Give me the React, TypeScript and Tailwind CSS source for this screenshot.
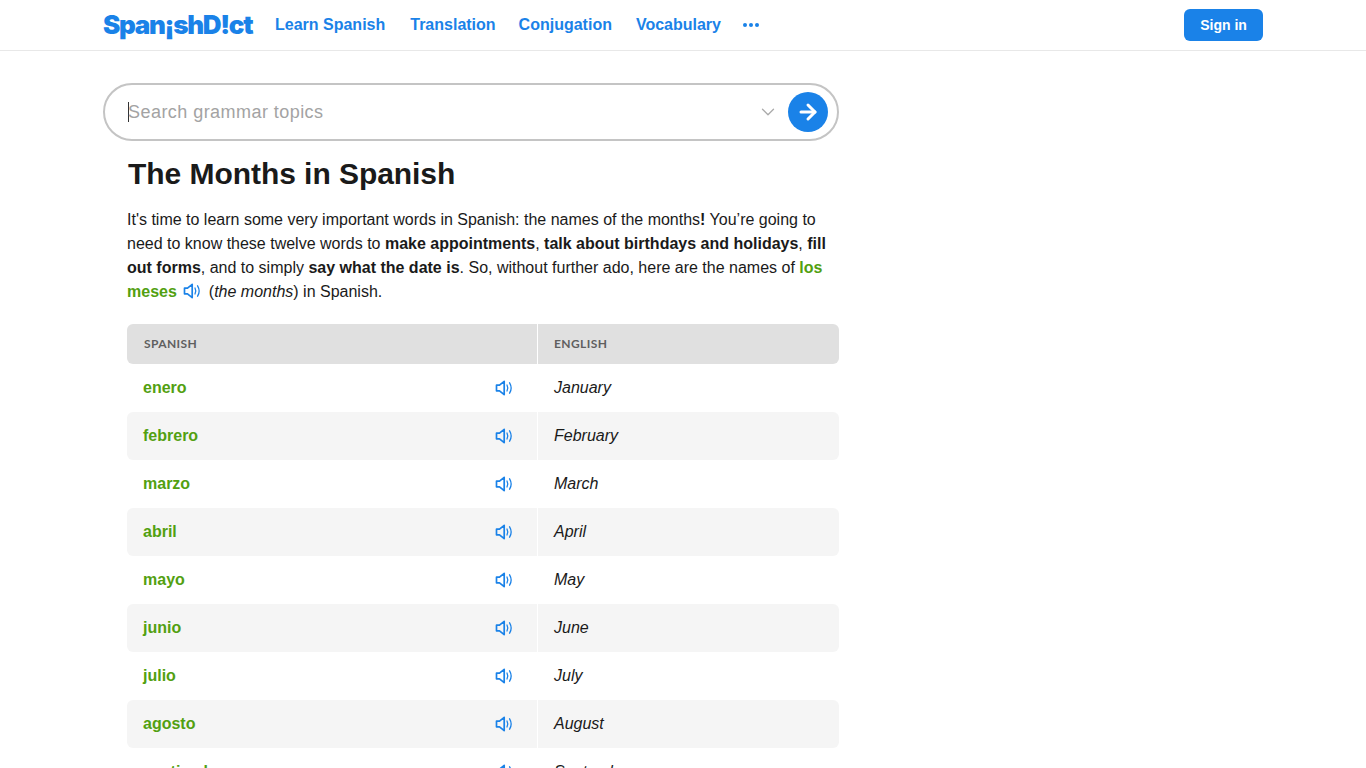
import React from 'react';
import { ArrowRight, ChevronDown } from 'lucide-react';

const months = [
  ['enero', 'January'],
  ['febrero', 'February'],
  ['marzo', 'March'],
  ['abril', 'April'],
  ['mayo', 'May'],
  ['junio', 'June'],
  ['julio', 'July'],
  ['agosto', 'August'],
  ['septiembre', 'September'],
  ['octubre', 'October'],
];

const navLinks = ['Learn Spanish', 'Translation', 'Conjugation', 'Vocabulary'];

function Speaker({ className }: { className?: string }) {
  return (
    <svg viewBox="0 0 18 16" fill="none" stroke="#1a82e8" className={className}>
      <path d="M1.500 5.200h3L9.200 1.400v13.200L4.500 10.800h-3z" strokeWidth="1.700" strokeLinejoin="round" />
      <path d="M12 5c1 1.900 1 4.100 0 6" strokeWidth="1.300" strokeLinecap="round" />
      <path d="M14.600 2.800c1.800 3 1.800 7.400 0 10.400" strokeWidth="1.300" strokeLinecap="round" />
    </svg>
  );
}

function Header() {
  return (
    <header className="h-[51px] border-b border-[#e8e8e8] bg-white">
      <div className="flex h-[50px] items-center pl-[103px] pr-[103px]">
        <a className="w-[172px] whitespace-nowrap font-['Inter',sans-serif] text-[26px] leading-none font-black tracking-[-1.3px] text-[#1a82e8]">
          Span¡shD!ct
        </a>
        <nav className="flex items-center gap-[24px] text-[16px] font-bold text-[#1a82e8]">
          {navLinks.map((link) => (
            <a key={link} className="whitespace-nowrap first:mr-[1px] nth-[2]:mr-[-1px]">{link}</a>
          ))}
          <div className="ml-[-2px] flex gap-[2px]">
            <span className="h-[4px] w-[4px] rounded-full bg-[#1a82e8]" />
            <span className="h-[4px] w-[4px] rounded-full bg-[#1a82e8]" />
            <span className="h-[4px] w-[4px] rounded-full bg-[#1a82e8]" />
          </div>
        </nav>
        <button
          type="button"
          className="ml-auto h-[32px] w-[79px] rounded-[6px] bg-[#1a82e8] text-[14px] font-bold text-white"
        >
          Sign in
        </button>
      </div>
    </header>
  );
}

function SearchBar() {
  return (
    <div className="flex h-[58px] w-[736px] items-center rounded-full border-2 border-[#c4c4c4] pl-[23px] pr-[9px]">
      <span className="mr-[-1px] h-[20px] w-px bg-[#333]" />
      <span className="flex-1 text-[18px] tracking-[0.45px] text-[#a3a3a3]">Search grammar topics</span>
      <ChevronDown className="mr-[9px] h-[22px] w-[22px] text-[#aaa]" strokeWidth={1.4} />
      <button type="button" className="flex h-[40px] w-[40px] items-center justify-center rounded-full bg-[#1a82e8]">
        <ArrowRight className="h-[24px] w-[24px] text-white" strokeWidth={3} />
      </button>
    </div>
  );
}

function MonthsTable() {
  return (
    <div className="mt-[20px] ml-[-1px] w-[712px]">
      <div className="flex h-[40px] rounded-[6px] bg-[#e0e0e0] text-[12px] font-bold tracking-[0.4px] text-[#5f5f5f]">
        <div className="flex w-[411px] items-center border-r border-white pl-[17px] font-['Lato',sans-serif]">SPANISH</div>
        <div className="flex flex-1 items-center pl-[16px] font-['Lato',sans-serif]">ENGLISH</div>
      </div>
      {months.map(([es, en], i) => (
        <div key={es} className={`flex h-[48px] rounded-[6px] ${i % 2 === 1 ? 'bg-[#f5f5f5]' : 'bg-white'}`}>
          <div className="flex w-[411px] items-center justify-between border-r border-white pl-[16px] pr-[24px]">
            <span className="text-[16px] font-bold text-[#52a010]">{es}</span>
            <Speaker className="h-[16px] w-[18px]" />
          </div>
          <div className="flex flex-1 items-center pl-[16px] text-[16px] text-[#1a1a1a] italic">{en}</div>
        </div>
      ))}
    </div>
  );
}

export default function App() {
  return (
    <div className="h-[768px] overflow-hidden bg-white font-['Liberation_Sans',Arial,sans-serif] text-[#1a1a1a]">
      <Header />
      <main className="pt-[32px] pl-[103px]">
        <SearchBar />
        <div className="pl-[25px]">
          <h1 className="mt-[15px] text-[30px] leading-[36px] font-bold tracking-[-0.05px]">The Months in Spanish</h1>
          <p className="mt-[16px] ml-[-1px] w-[712px] text-[16px] leading-[24px]">
            It's time to learn some very important words in Spanish: the names of the months<b>!</b> You’re going to
            need to know these twelve words to <b>make appointments</b>, <b>talk about birthdays and holidays</b>,{' '}
            <b>fill out forms</b>, and to simply <b>say what the date is</b>. So, without further ado, here are the
            names of <b className="text-[#52a010]">los meses</b>
            <Speaker className="mr-[8px] ml-[6px] inline-block h-[16px] w-[18px] align-[-2px]" />
            (<i>the months</i>) in Spanish.
          </p>
          <MonthsTable />
        </div>
      </main>
    </div>
  );
}
